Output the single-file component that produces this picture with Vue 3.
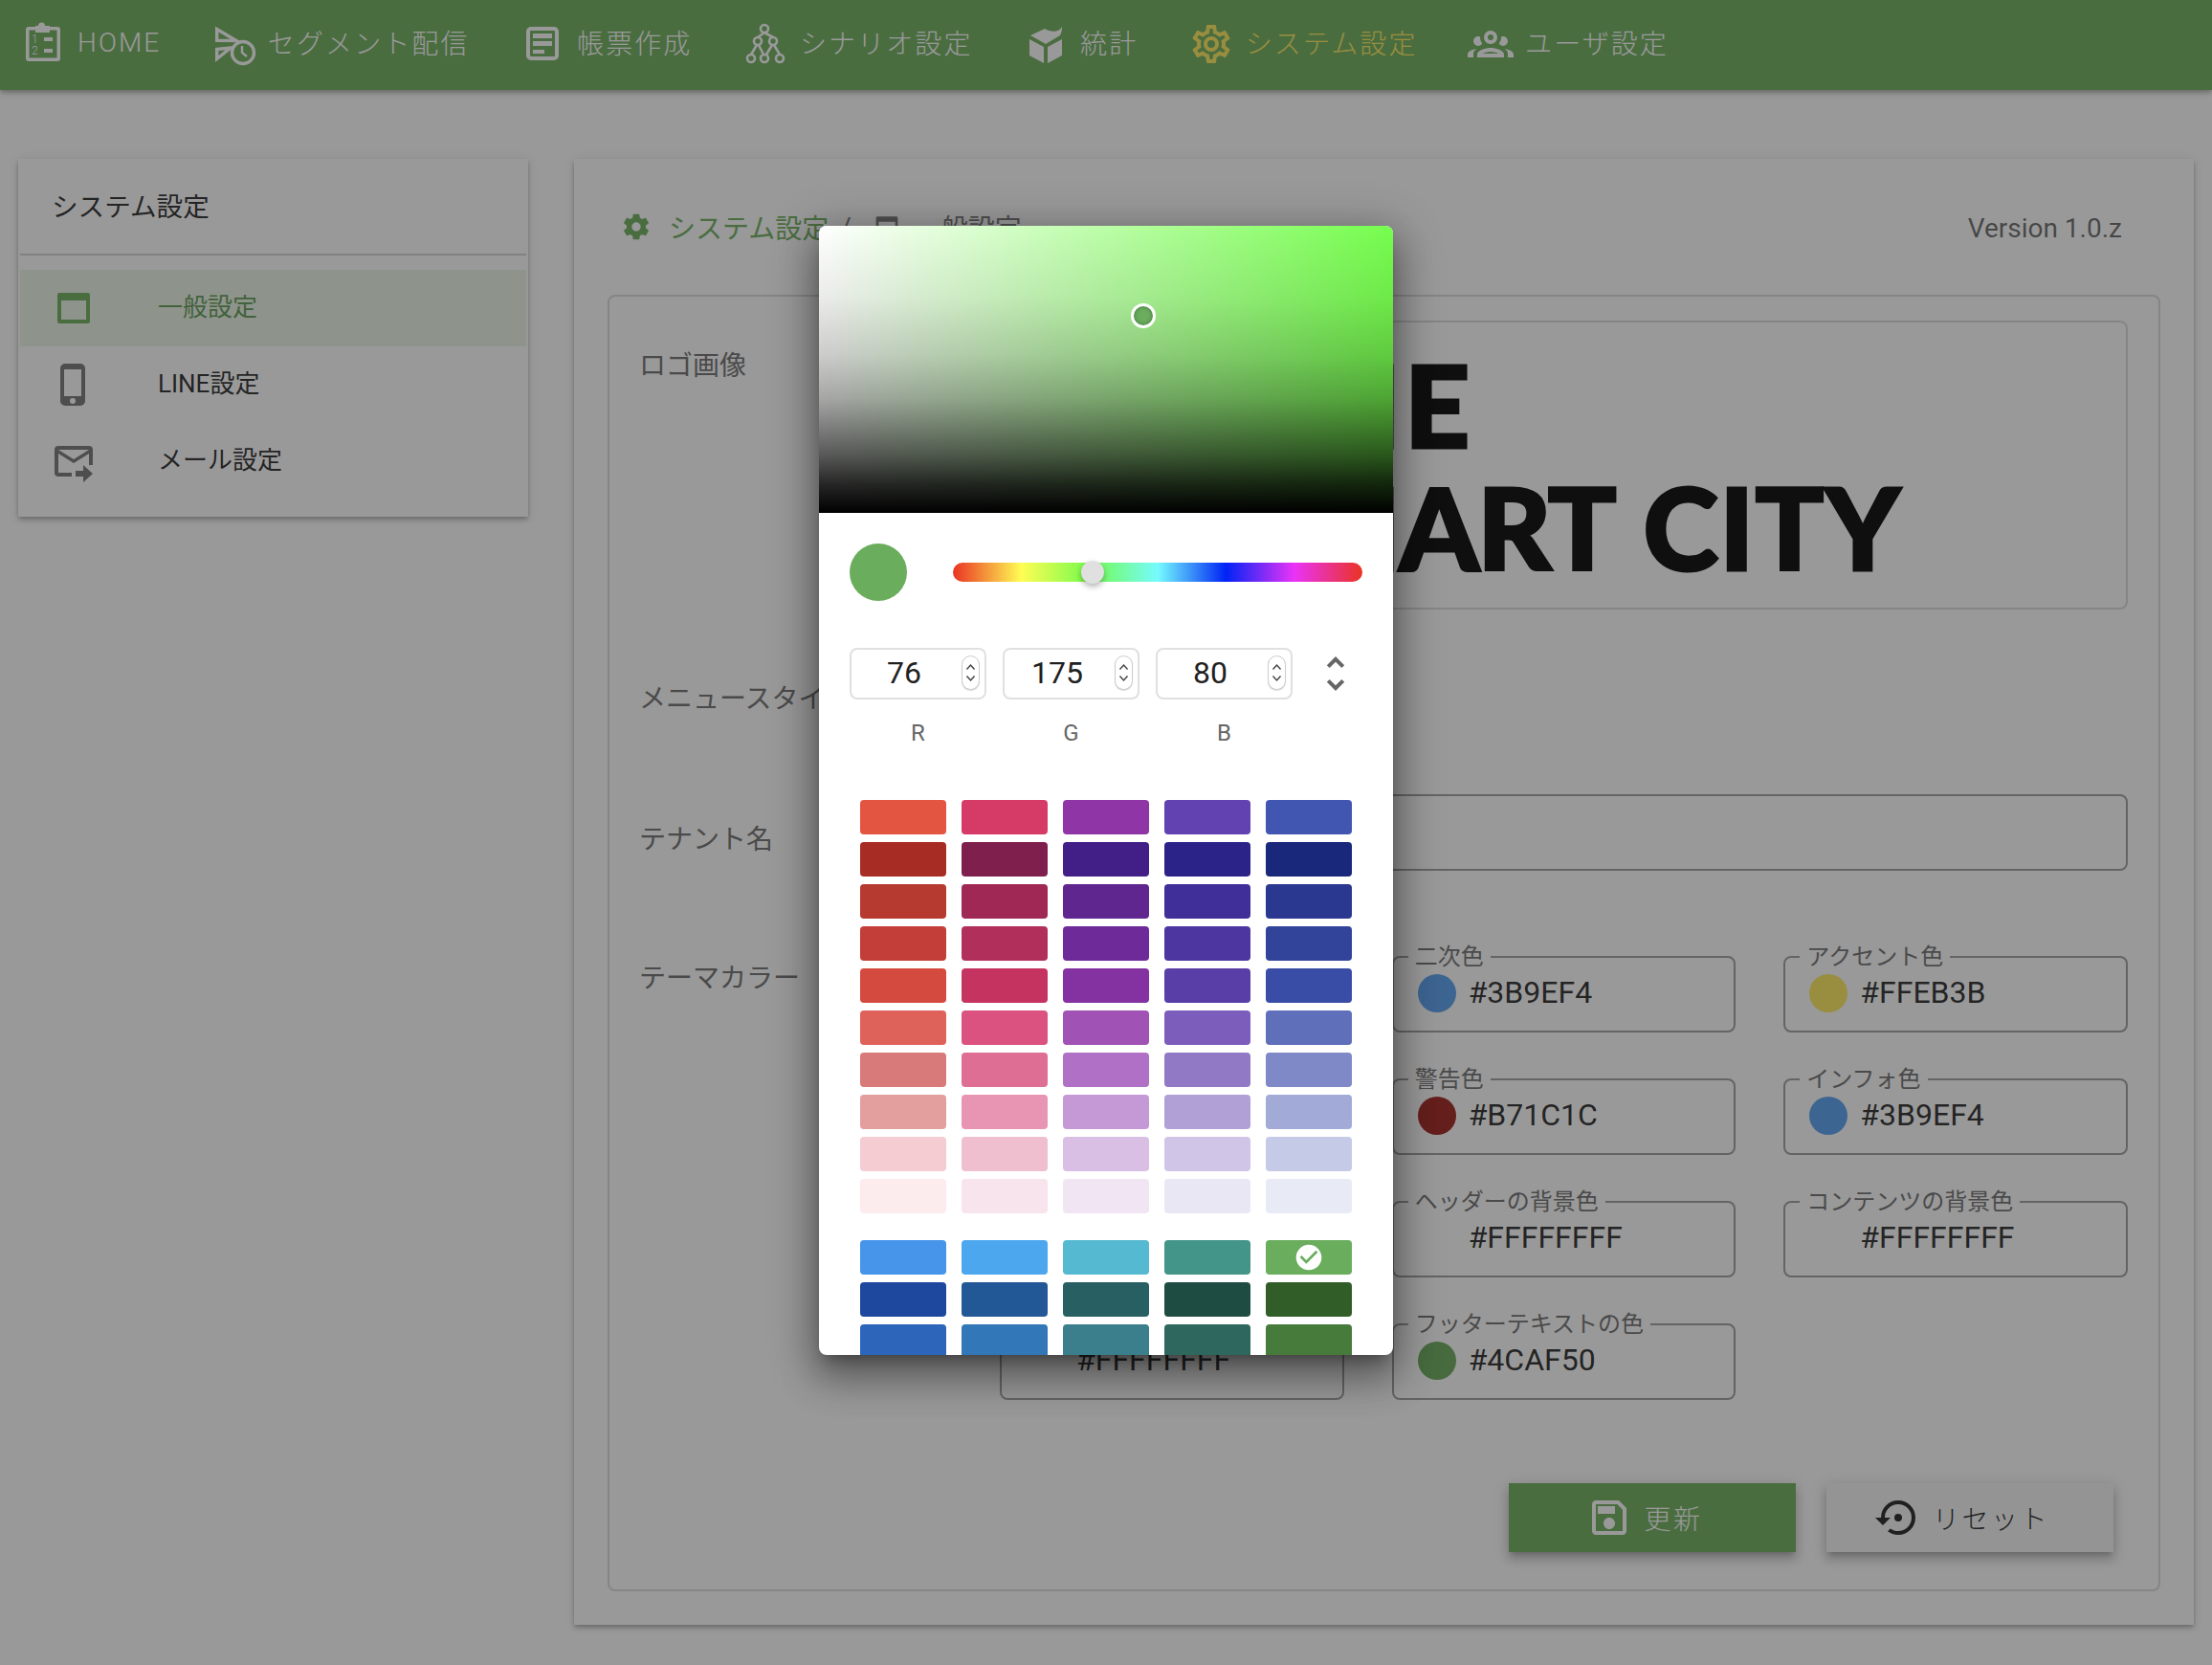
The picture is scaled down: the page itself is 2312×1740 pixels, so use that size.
<template>
  <div class="page">
    <header class="topbar">
      <a class="nav-item nav-item--home">
        <svg class="nav-icon" viewBox="0 0 48 48">
          <path fill="currentColor" d="M9 6H16V5H19A3.5 3.5 0 0 1 26 5H31V6H39A3 3 0 0 1 42 9V39A3 3 0 0 1 39 42H9A3 3 0 0 1 6 39V9A3 3 0 0 1 9 6ZM9.5 9.5V38.5H38.5V9.5H31V12H16V9.5Z" fill-rule="evenodd" />
          <rect x="25" y="17" width="9" height="4" fill="currentColor" />
          <rect x="25" y="29" width="9" height="4" fill="currentColor" />
          <text x="12" y="23" class="nav-icon__num">1</text>
          <text x="12" y="35" class="nav-icon__num">2</text>
        </svg>
        <span>HOME</span>
      </a>
      <a class="nav-item nav-item--segment">
        <svg class="nav-icon" viewBox="0 0 48 48" fill="none" stroke="currentColor" stroke-width="3.4">
          <path d="M3.7 8.5L24 20.5L3.7 20.3Z" />
          <path d="M3.7 29.5L18 28L3.7 39.5Z" />
          <circle cx="31" cy="33" r="11.5" />
          <path d="M30 26V33L35 37" stroke-width="2.4" />
        </svg>
        <span>セグメント配信</span>
      </a>
      <a class="nav-item">
        <svg class="nav-icon" viewBox="0 0 48 48">
          <rect x="9" y="8" width="30" height="31" rx="3" fill="none" stroke="currentColor" stroke-width="4" />
          <rect x="14" y="13" width="20" height="5" fill="currentColor" />
          <rect x="14" y="21" width="20" height="5" fill="currentColor" />
          <rect x="14" y="30" width="12" height="4" fill="currentColor" />
        </svg>
        <span>帳票作成</span>
      </a>
      <a class="nav-item">
        <svg class="nav-icon" viewBox="0 0 48 48" fill="none" stroke="currentColor" stroke-width="2.6">
          <path d="M23 12L16 17M23 12L32 17M15 25L9 35M17 25L22 35M31 25L25 35M33 25L39 35" />
          <circle cx="23" cy="8" r="4" />
          <circle cx="16" cy="21" r="4" />
          <circle cx="32" cy="21" r="4" />
          <circle cx="9" cy="39" r="4" />
          <circle cx="23" cy="39" r="4" />
          <circle cx="39" cy="39" r="4" />
        </svg>
        <span>シナリオ設定</span>
      </a>
      <a class="nav-item">
        <svg class="nav-icon" viewBox="0 0 48 48" fill="currentColor">
          <path d="M7 19L22 27V44L7 36Z" />
          <path d="M26 27L41 19V36L26 44Z" />
          <path d="M8 15L23 8C30 12 37 12 41 6C41 11 40 13 39 15L24 24Z" />
        </svg>
        <span>統計</span>
      </a>
      <a class="nav-item nav-item--active">
        <svg class="nav-icon" viewBox="0 0 24 24"><path fill="currentColor" :d="icons.cogOutline" /></svg>
        <span>システム設定</span>
      </a>
      <a class="nav-item">
        <svg class="nav-icon" viewBox="0 0 24 24"><path fill="currentColor" :d="icons.group" /></svg>
        <span>ユーザ設定</span>
      </a>
    </header>

    <div class="content">
      <aside class="side">
        <div class="side__title">システム設定</div>
        <div class="side__divider"></div>
        <div class="side__list">
          <div
            v-for="item in sideItems"
            :key="item.label"
            class="side__item"
            :class="{ 'side__item--active': item.active }"
          >
            <svg class="side__icon" viewBox="0 0 24 24"><path fill="currentColor" :d="item.icon" /></svg>
            <span class="side__text">{{ item.label }}</span>
          </div>
        </div>
      </aside>

      <main class="panel">
        <div class="crumbs">
          <svg class="crumbs__icon" viewBox="0 0 24 24"><path fill="currentColor" :d="icons.cog" /></svg>
          <span class="crumbs__link">システム設定</span>
          <span class="crumbs__sep">/</span>
          <svg class="crumbs__icon crumbs__icon--dark" viewBox="0 0 24 24"><path fill="currentColor" :d="icons.window" /></svg>
          <span class="crumbs__now">一般設定</span>
          <span class="crumbs__version">Version 1.0.z</span>
        </div>

        <section class="form">
          <div class="form__row form__row--logo">
            <div class="form__label">ロゴ画像</div>
            <div class="logo-box">
              <div class="logo-box__text"><span class="logo-box__the">THE</span><br /><span class="logo-box__smart">SMART</span> CITY</div>
            </div>
          </div>

          <div class="form__row form__row--menu">
            <div class="form__label">メニュースタイル</div>
            <div></div>
          </div>

          <div class="form__row form__row--tenant">
            <div class="form__label">テナント名</div>
            <div class="tenant-input"></div>
          </div>

          <div class="form__row form__row--theme">
            <div class="form__label">テーマカラー</div>
            <div class="theme-grid">
              <fieldset v-for="field in themeFields" :key="field.label" class="color-field">
                <legend class="color-field__legend">{{ field.label }}</legend>
                <span class="color-field__dot" :style="{ background: field.dot }"></span>
                <span class="color-field__value">{{ field.value }}</span>
              </fieldset>
            </div>
          </div>

          <div class="actions">
            <button class="btn btn--primary">
              <svg class="btn__icon" viewBox="0 0 24 24"><path fill="currentColor" :d="icons.save" /></svg>
              更新
            </button>
            <button class="btn">
              <svg class="btn__icon" viewBox="0 0 24 24"><path fill="currentColor" :d="icons.restore" /></svg>
              リセット
            </button>
          </div>
        </section>
      </main>
    </div>

    <div class="overlay"></div>

    <div class="dialog-wrap">
      <div class="picker">
        <div class="picker__canvas">
          <span class="picker__dot"></span>
        </div>

        <div class="picker__controls">
          <span class="picker__preview"></span>
          <div class="picker__hue">
            <span class="picker__thumb"></span>
          </div>
        </div>

        <div class="picker__inputs">
          <div v-for="c in rgb" :key="c.label" class="rgb">
            <div class="rgb__box">
              {{ c.value }}
              <span class="rgb__spin">
                <svg viewBox="0 0 19 36" fill="none" stroke="#444" stroke-width="1.6">
                  <path d="M5 14L9.5 9L14 14M5 22L9.5 27L14 22" />
                </svg>
              </span>
            </div>
            <div class="rgb__label">{{ c.label }}</div>
          </div>
          <svg class="picker__mode" viewBox="0 0 24 24"><path fill="currentColor" :d="icons.unfold" /></svg>
        </div>

        <div class="swatches">
          <div v-for="(group, g) in swatchGroups" :key="g" class="swatches__group">
            <template v-for="(row, r) in group" :key="r">
              <div
                v-for="color in row"
                :key="color"
                class="swatch"
                :style="{ background: color }"
              >
                <svg v-if="color === selected" class="swatch__check" viewBox="0 0 24 24">
                  <path fill="#fff" :d="icons.checkCircle" />
                </svg>
              </div>
            </template>
          </div>
        </div>
      </div>
    </div>
  </div>
</template>

<script setup>
const icons = {
  cogOutline: 'M12,8A4,4 0 0,1 16,12A4,4 0 0,1 12,16A4,4 0 0,1 8,12A4,4 0 0,1 12,8M12,10A2,2 0 0,0 10,12A2,2 0 0,0 12,14A2,2 0 0,0 14,12A2,2 0 0,0 12,10M10,22C9.75,22 9.54,21.82 9.5,21.58L9.13,18.93C8.5,18.68 7.96,18.34 7.44,17.94L4.95,18.95C4.73,19.03 4.46,18.95 4.34,18.73L2.34,15.27C2.21,15.05 2.27,14.78 2.46,14.63L4.57,12.97L4.5,12L4.57,11L2.46,9.37C2.27,9.22 2.21,8.95 2.34,8.73L4.34,5.27C4.46,5.05 4.73,4.96 4.95,5.05L7.44,6.05C7.96,5.66 8.5,5.32 9.13,5.07L9.5,2.42C9.54,2.18 9.75,2 10,2H14C14.25,2 14.46,2.18 14.5,2.42L14.87,5.07C15.5,5.32 16.04,5.66 16.56,6.05L19.05,5.05C19.27,4.96 19.54,5.05 19.66,5.27L21.66,8.73C21.79,8.95 21.73,9.22 21.54,9.37L19.43,11L19.5,12L19.43,13L21.54,14.63C21.73,14.78 21.79,15.05 21.66,15.27L19.66,18.73C19.54,18.95 19.27,19.04 19.05,18.95L16.56,17.95C16.04,18.34 15.5,18.68 14.87,18.93L14.5,21.58C14.46,21.82 14.25,22 14,22H10M11.25,4L10.88,6.61C9.68,6.86 8.62,7.5 7.85,8.39L5.44,7.35L4.69,8.65L6.8,10.2C6.4,11.37 6.4,12.64 6.8,13.8L4.68,15.36L5.43,16.66L7.86,15.62C8.63,16.5 9.68,17.14 10.87,17.38L11.24,20H12.76L13.13,17.39C14.32,17.14 15.37,16.5 16.14,15.62L18.57,16.66L19.32,15.36L17.2,13.81C17.6,12.64 17.6,11.37 17.2,10.2L19.31,8.65L18.56,7.35L16.15,8.39C15.38,7.5 14.32,6.86 13.12,6.62L12.75,4H11.25Z',
  cog: 'M12,15.5A3.5,3.5 0 0,1 8.5,12A3.5,3.5 0 0,1 12,8.5A3.5,3.5 0 0,1 15.5,12A3.5,3.5 0 0,1 12,15.5M19.43,12.97C19.47,12.65 19.5,12.33 19.5,12C19.5,11.67 19.47,11.34 19.43,11L21.54,9.37C21.73,9.22 21.78,8.95 21.66,8.73L19.66,5.27C19.54,5.05 19.27,4.96 19.05,5.05L16.56,6.05C16.04,5.66 15.5,5.32 14.87,5.07L14.5,2.42C14.46,2.18 14.25,2 14,2H10C9.75,2 9.54,2.18 9.5,2.42L9.13,5.07C8.5,5.32 7.96,5.66 7.44,6.05L4.95,5.05C4.73,4.96 4.46,5.05 4.34,5.27L2.34,8.73C2.21,8.95 2.27,9.22 2.46,9.37L4.57,11C4.53,11.34 4.5,11.67 4.5,12C4.5,12.33 4.53,12.65 4.57,12.97L2.46,14.63C2.27,14.78 2.21,15.05 2.34,15.27L4.34,18.73C4.46,18.95 4.73,19.03 4.95,18.95L7.44,17.94C7.96,18.34 8.5,18.68 9.13,18.93L9.5,21.58C9.54,21.82 9.75,22 10,22H14C14.25,22 14.46,21.82 14.5,21.58L14.87,18.93C15.5,18.67 16.04,18.34 16.56,17.94L19.05,18.95C19.27,19.03 19.54,18.95 19.66,18.73L21.66,15.27C21.78,15.05 21.73,14.78 21.54,14.63L19.43,12.97Z',
  group: 'M12,5A3.5,3.5 0 0,0 8.5,8.5A3.5,3.5 0 0,0 12,12A3.5,3.5 0 0,0 15.5,8.5A3.5,3.5 0 0,0 12,5M12,7A1.5,1.5 0 0,1 13.5,8.5A1.5,1.5 0 0,1 12,10A1.5,1.5 0 0,1 10.5,8.5A1.5,1.5 0 0,1 12,7M5.5,8A2.5,2.5 0 0,0 3,10.5C3,11.44 3.53,12.25 4.29,12.68C4.65,12.88 5.06,13 5.5,13C5.94,13 6.35,12.88 6.71,12.68C7.08,12.47 7.39,12.17 7.62,11.81C6.89,10.86 6.5,9.7 6.5,8.5C6.5,8.41 6.5,8.31 6.5,8.22C6.2,8.08 5.86,8 5.5,8M18.5,8C18.14,8 17.8,8.08 17.5,8.22C17.5,8.31 17.5,8.41 17.5,8.5C17.5,9.7 17.11,10.86 16.38,11.81C16.5,12 16.63,12.15 16.78,12.3C16.94,12.45 17.1,12.58 17.29,12.68C17.65,12.88 18.06,13 18.5,13C18.94,13 19.35,12.88 19.71,12.68C20.47,12.25 21,11.44 21,10.5A2.5,2.5 0 0,0 18.5,8M12,14C9.66,14 5,15.17 5,17.5V19H19V17.5C19,15.17 14.34,14 12,14M4.71,14.55C2.78,14.78 0,15.76 0,17.5V19H3V17.07C3,16.06 3.69,15.22 4.71,14.55M19.29,14.55C20.31,15.22 21,16.06 21,17.07V19H24V17.5C24,15.76 21.22,14.78 19.29,14.55M12,16C13.53,16 15.24,16.5 16.23,17H7.77C8.76,16.5 10.47,16 12,16Z',
  save: 'M17 3H5C3.89 3 3 3.9 3 5V19C3 20.1 3.89 21 5 21H19C20.1 21 21 20.1 21 19V7L17 3M19 19H5V5H16.17L19 7.83V19M12 12C10.34 12 9 13.34 9 15S10.34 18 12 18 15 16.66 15 15 13.66 12 12 12M6 6H15V10H6V6Z',
  restore: 'M12,3A9,9 0 0,0 3,12H0L4,16L8,12H5A7,7 0 0,1 12,5A7,7 0 0,1 19,12A7,7 0 0,1 12,19C10.5,19 9.09,18.5 7.94,17.7L6.5,19.14C8.04,20.3 9.94,21 12,21A9,9 0 0,0 21,12A9,9 0 0,0 12,3M14,12A2,2 0 0,0 12,10A2,2 0 0,0 10,12A2,2 0 0,0 12,14A2,2 0 0,0 14,12Z',
  unfold: 'M12,18.17L8.83,15L7.42,16.41L12,21L16.59,16.41L15.17,15M12,5.83L15.17,9L16.58,7.59L12,3L7.41,7.59L8.83,9L12,5.83Z',
  checkCircle: 'M12 2C6.5 2 2 6.5 2 12S6.5 22 12 22 22 17.5 22 12 17.5 2 12 2M10 17L5 12L6.41 10.59L10 14.17L17.59 6.58L19 8L10 17Z',
  window: 'M4.5,4H19.5A1,1 0 0,1 20.5,5V19A1,1 0 0,1 19.5,20H4.5A1,1 0 0,1 3.5,19V5A1,1 0 0,1 4.5,4M5.5,8V18H18.5V8H5.5Z',
  phone: 'M16,18H7V4H16M11.5,22A1.5,1.5 0 0,1 10,20.5A1.5,1.5 0 0,1 11.5,19A1.5,1.5 0 0,1 13,20.5A1.5,1.5 0 0,1 11.5,22M15.5,1H7.5A2.5,2.5 0 0,0 5,3.5V20.5A2.5,2.5 0 0,0 7.5,23H15.5A2.5,2.5 0 0,0 18,20.5V3.5A2.5,2.5 0 0,0 15.5,1Z',
  mail: 'M13 17H17V14L22 18.5L17 23V20H13V17M20 4H4A2 2 0 0 0 2 6V18A2 2 0 0 0 4 20H11V18H4V8L12 13L20 8V14H22V6A2 2 0 0 0 20 4M12 11L4 6H20L12 11Z'
}

const sideItems = [
  { label: '一般設定', icon: icons.window, active: true },
  { label: 'LINE設定', icon: icons.phone },
  { label: 'メール設定', icon: icons.mail }
]

const themeFields = [
  { label: '一次色', value: '#4CAF50', dot: '#68a95a' },
  { label: '二次色', value: '#3B9EF4', dot: '#559ff0' },
  { label: 'アクセント色', value: '#FFEB3B', dot: '#ffe95a' },
  { label: '成功色', value: '#4CAF50', dot: '#68a95a' },
  { label: '警告色', value: '#B71C1C', dot: '#9f1e18' },
  { label: 'インフォ色', value: '#3B9EF4', dot: '#559ff0' },
  { label: 'メニューの背景色', value: '#4CAF50', dot: '#68a95a' },
  { label: 'ヘッダーの背景色', value: '#FFFFFFFF', dot: '#fff' },
  { label: 'コンテンツの背景色', value: '#FFFFFFFF', dot: '#fff' },
  { label: 'フッターの背景色', value: '#FFFFFFFF', dot: '#fff' },
  { label: 'フッターテキストの色', value: '#4CAF50', dot: '#68a95a' }
]

const rgb = [
  { label: 'R', value: 76 },
  { label: 'G', value: 175 },
  { label: 'B', value: 80 }
]

const selected = '#69ad5d'

const swatchGroups = [
  [
    ['#e35541', '#d63a66', '#8f35a6', '#6241b0', '#4156b1'],
    ['#a62c24', '#7e1f4d', '#421f86', '#2c2389', '#19287a'],
    ['#b63a30', '#9f2855', '#60268f', '#402f98', '#2b388f'],
    ['#c33e38', '#b1305b', '#6f2a9a', '#4d36a0', '#31449a'],
    ['#d54a3e', '#c53461', '#8431a1', '#5a3ea8', '#3a4da6'],
    ['#df625a', '#db5180', '#a052b5', '#7c5dbb', '#5f6fba'],
    ['#d87a79', '#df6e95', '#af70c5', '#9179c6', '#7f89c7'],
    ['#e39f9e', '#e795b2', '#c499d6', '#b0a0d6', '#a2abd8'],
    ['#f6ccd3', '#efbfcf', '#dabfe4', '#d0c5e7', '#c5cae7'],
    ['#fcecee', '#f7e4ec', '#f1e5f3', '#eae7f5', '#e8eaf6']
  ],
  [
    ['#4795ea', '#4ca7ee', '#55b9d1', '#449589', '#69ad5d'],
    ['#1d489e', '#225896', '#285f63', '#1e4c42', '#315d29'],
    ['#2c65ba', '#3277b7', '#3b7f8c', '#2d675d', '#477b3b']
  ]
]
</script>

<style scoped>
.page {
  position: relative;
  width: 2312px;
  height: 1740px;
  overflow: hidden;
  background: #fff;
  font-family: Roboto, "Noto Sans CJK JP", sans-serif;
  color: rgba(0, 0, 0, 0.87);
}

.topbar {
  display: flex;
  align-items: center;
  gap: 52.5px;
  height: 94px;
  padding: 0 0 2px 21px;
  box-sizing: border-box;
  background: #6dae5c;
  box-shadow: 0 2px 4px -1px rgba(0, 0, 0, 0.2), 0 4px 5px rgba(0, 0, 0, 0.14), 0 1px 10px rgba(0, 0, 0, 0.12);
}

.nav-item {
  display: flex;
  align-items: center;
  gap: 12px;
  color: #fff;
  font-size: 28px;
  font-weight: 300;
  letter-spacing: 2.1px;
}

.nav-item span {
  position: relative;
  top: -2px;
}

.nav-item--home {
  margin-right: 2px;
}

.nav-item--segment {
  gap: 9px;
}

.nav-item--active {
  color: #ffeb5a;
}

.nav-icon {
  display: block;
  width: 48px;
  height: 48px;
}

.nav-icon__num {
  font-size: 12px;
  font-family: Roboto, sans-serif;
  fill: currentColor;
  letter-spacing: 0;
}

.content {
  display: flex;
  align-items: flex-start;
  gap: 48px;
  padding: 72px 0 0 19px;
}

.side {
  width: 533px;
  background: #fff;
  box-shadow: 0 2px 4px -1px rgba(0, 0, 0, 0.2), 0 4px 5px rgba(0, 0, 0, 0.14), 0 1px 10px rgba(0, 0, 0, 0.12);
}

.side__title {
  height: 99px;
  padding-left: 35px;
  font-size: 27.6px;
  line-height: 101px;
}

.side__divider {
  height: 2px;
  margin: 0 2px;
  background: #d2d2d2;
}

.side__list {
  padding: 15px 2px 18px;
}

.side__item {
  display: flex;
  align-items: center;
  height: 80px;
  padding-left: 32px;
  font-size: 26px;
  color: rgba(0, 0, 0, 0.87);
}

.side__item--active {
  background: #ebf6e7;
  color: #5f9a52;
}

.side__icon {
  width: 48px;
  height: 48px;
  margin-right: 64px;
  color: #757575;
}

.side__text {
  position: relative;
  top: -4px;
}

.side__item--active .side__icon {
  color: #6dae5c;
}

.panel {
  width: 1693px;
  height: 1532px;
  padding: 0 35px;
  box-sizing: border-box;
  background: #fff;
  box-shadow: 0 2px 4px -1px rgba(0, 0, 0, 0.2), 0 4px 5px rgba(0, 0, 0, 0.14), 0 1px 10px rgba(0, 0, 0, 0.12);
}

.crumbs {
  display: flex;
  align-items: center;
  height: 142px;
  padding: 0 40px 0 14px;
  font-size: 28px;
}

.crumbs__icon {
  width: 32px;
  height: 32px;
  color: #6dae5c;
}

.crumbs__icon--dark {
  color: #757575;
}

.crumbs__link {
  margin-left: 18px;
  color: #6dae5c;
}

.crumbs__sep {
  margin: 0 21px 0 12px;
  color: #757575;
}

.crumbs__now {
  margin-left: 13px;
  color: #757575;
}

.crumbs__version {
  margin: 3px 0 0 auto;
  font-size: 28px;
  color: rgba(0, 0, 0, 0.6);
}

.form {
  height: 1355px;
  padding: 25px 32px 0;
  box-sizing: border-box;
  border: 2px solid #dadada;
  border-radius: 8px;
}

.form__row {
  display: grid;
  grid-template-columns: 376px 1fr;
}

.form__label {
  margin-left: -1px;
  font-size: 28px;
  line-height: 40px;
  color: #6e6e6e;
}

.form__row--logo .form__label {
  padding-top: 28px;
}

.logo-box {
  height: 302px;
  padding-left: 225px;
  box-sizing: border-box;
  border: 2px solid #dadada;
  border-radius: 8px;
  overflow: hidden;
}

.logo-box__text {
  margin-top: 21px;
  font-family: Lato, sans-serif;
  font-weight: 900;
  font-size: 119px;
  line-height: 128px;
  letter-spacing: 1.3px;
  white-space: nowrap;
  color: #000;
  -webkit-text-stroke: 3px #000;
}

.logo-box__the {
  margin-left: 24px;
  letter-spacing: 4px;
}

.logo-box__smart {
  margin-left: 15px;
  letter-spacing: -1.7px;
}

.form__row--menu {
  height: 193px;
}

.form__row--menu .form__label {
  padding-top: 74px;
}

.form__row--tenant .form__label {
  padding-top: 28px;
}

.tenant-input {
  height: 80px;
  box-sizing: border-box;
  border: 2px solid rgba(0, 0, 0, 0.38);
  border-radius: 8px;
}

.form__row--theme {
  margin-top: 78px;
}

.form__row--theme .form__label {
  padding-top: 15px;
}

.theme-grid {
  display: grid;
  grid-template-columns: repeat(3, 1fr);
  column-gap: 50px;
  row-gap: 37px;
}

.color-field {
  display: flex;
  align-items: center;
  height: 91px;
  min-width: 0;
  margin: 0;
  padding: 0 0 14px 25px;
  box-sizing: border-box;
  border: 2px solid rgba(0, 0, 0, 0.38);
  border-radius: 8px;
}

.color-field__legend {
  margin-left: -10px;
  padding: 0 7px;
  font-size: 24px;
  line-height: 24px;
  color: #6e6e6e;
}

.color-field__dot {
  flex: none;
  width: 40px;
  height: 40px;
  border-radius: 50%;
}

.color-field__value {
  position: relative;
  top: -1px;
  margin-left: 13px;
  font-size: 32px;
}

.actions {
  display: flex;
  justify-content: flex-end;
  gap: 32px;
  margin-top: 87px;
  padding-right: 15px;
}

.btn {
  display: flex;
  align-items: center;
  justify-content: center;
  width: 300px;
  height: 72px;
  padding: 0 16px 0 0;
  border: 0;
  background: #f5f5f5;
  color: rgba(0, 0, 0, 0.87);
  font-family: inherit;
  font-size: 28px;
  font-weight: 300;
  letter-spacing: 2.5px;
  box-shadow: 0 5px 5px -3px rgba(0, 0, 0, 0.2), 0 8px 10px 1px rgba(0, 0, 0, 0.14), 0 3px 14px 2px rgba(0, 0, 0, 0.12);
}

.btn--primary {
  background: #6dae5c;
  color: #fff;
}

.btn__icon {
  width: 48px;
  height: 48px;
  margin-right: 12px;
}

.overlay {
  position: absolute;
  inset: 0;
  background: #212121;
  opacity: 0.46;
}

.dialog-wrap {
  position: absolute;
  inset: 236px 0 auto;
  display: flex;
  justify-content: center;
}

.picker {
  width: 600px;
  height: 1180px;
  overflow: hidden;
  background: #fff;
  border-radius: 8px;
  box-shadow: 0 11px 15px -7px rgba(0, 0, 0, 0.3), 0 24px 38px 3px rgba(0, 0, 0, 0.25), 0 9px 46px 8px rgba(0, 0, 0, 0.25);
}

.picker__canvas {
  position: relative;
  height: 300px;
  background:
    linear-gradient(to bottom, transparent, rgba(0, 0, 0, 0.08) 25%, rgba(0, 0, 0, 0.2) 45%, rgba(0, 0, 0, 0.35) 60%, rgba(0, 0, 0, 0.5) 70%, rgba(0, 0, 0, 0.66) 80%, rgba(0, 0, 0, 0.85) 90%, #000),
    linear-gradient(to right, #fff, #76fd4e);
}

.picker__dot {
  position: absolute;
  left: 326px;
  top: 81px;
  width: 26px;
  height: 26px;
  box-sizing: border-box;
  border: 3px solid #fff;
  border-radius: 50%;
  background: #69ad5d;
  box-shadow: inset 0 0 4px rgba(0, 0, 0, 0.35);
}

.picker__controls {
  display: flex;
  align-items: center;
  gap: 48px;
  padding: 32px 32px 0;
}

.picker__preview {
  flex: none;
  width: 60px;
  height: 60px;
  border-radius: 50%;
  background: #69ad5d;
}

.picker__hue {
  position: relative;
  flex: 1;
  height: 20px;
  border-radius: 10px;
  background: linear-gradient(to right, #ea3323, #fffd54 16.67%, #75fb4c 33.33%, #75fbfd 50%, #0023f5 66.67%, #ea33f7 83.33%, #ea3323);
}

.picker__thumb {
  position: absolute;
  left: 134px;
  top: -2px;
  width: 24px;
  height: 24px;
  border-radius: 50%;
  background: #e0e0e0;
  box-shadow: 0 3px 6px rgba(0, 0, 0, 0.3);
}

.picker__inputs {
  display: flex;
  gap: 17px;
  padding: 49px 0 0 32px;
}

.rgb {
  width: 143px;
}

.rgb__box {
  position: relative;
  height: 54px;
  padding-right: 29px;
  box-sizing: border-box;
  border: 2px solid #e0e0e0;
  border-radius: 8px;
  font-size: 32px;
  line-height: 48px;
  text-align: center;
  color: #212121;
}

.rgb__spin {
  position: absolute;
  right: 5px;
  top: 6px;
  width: 19px;
  height: 36px;
  box-sizing: border-box;
  border: 1px solid #ccc;
  border-radius: 10px;
  background: #fff;
  box-shadow: 0 1px 1px rgba(0, 0, 0, 0.15);
}

.rgb__spin svg {
  display: block;
  width: 17px;
  height: 34px;
}

.rgb__label {
  margin-top: 23px;
  font-size: 24px;
  line-height: 24px;
  text-align: center;
  color: #666;
}

.picker__mode {
  width: 48px;
  height: 48px;
  margin: 3px 0 0 4px;
  color: #666;
}

.swatches {
  padding: 58px 0 0 43px;
}

.swatches__group {
  display: grid;
  grid-template-columns: repeat(5, 90px);
  gap: 8px 16px;
  margin-bottom: 28px;
}

.swatch {
  display: flex;
  align-items: center;
  justify-content: center;
  height: 36px;
  border-radius: 4px;
}

.swatch__check {
  width: 32px;
  height: 32px;
}
</style>

<style>
body {
  margin: 0;
}
</style>
